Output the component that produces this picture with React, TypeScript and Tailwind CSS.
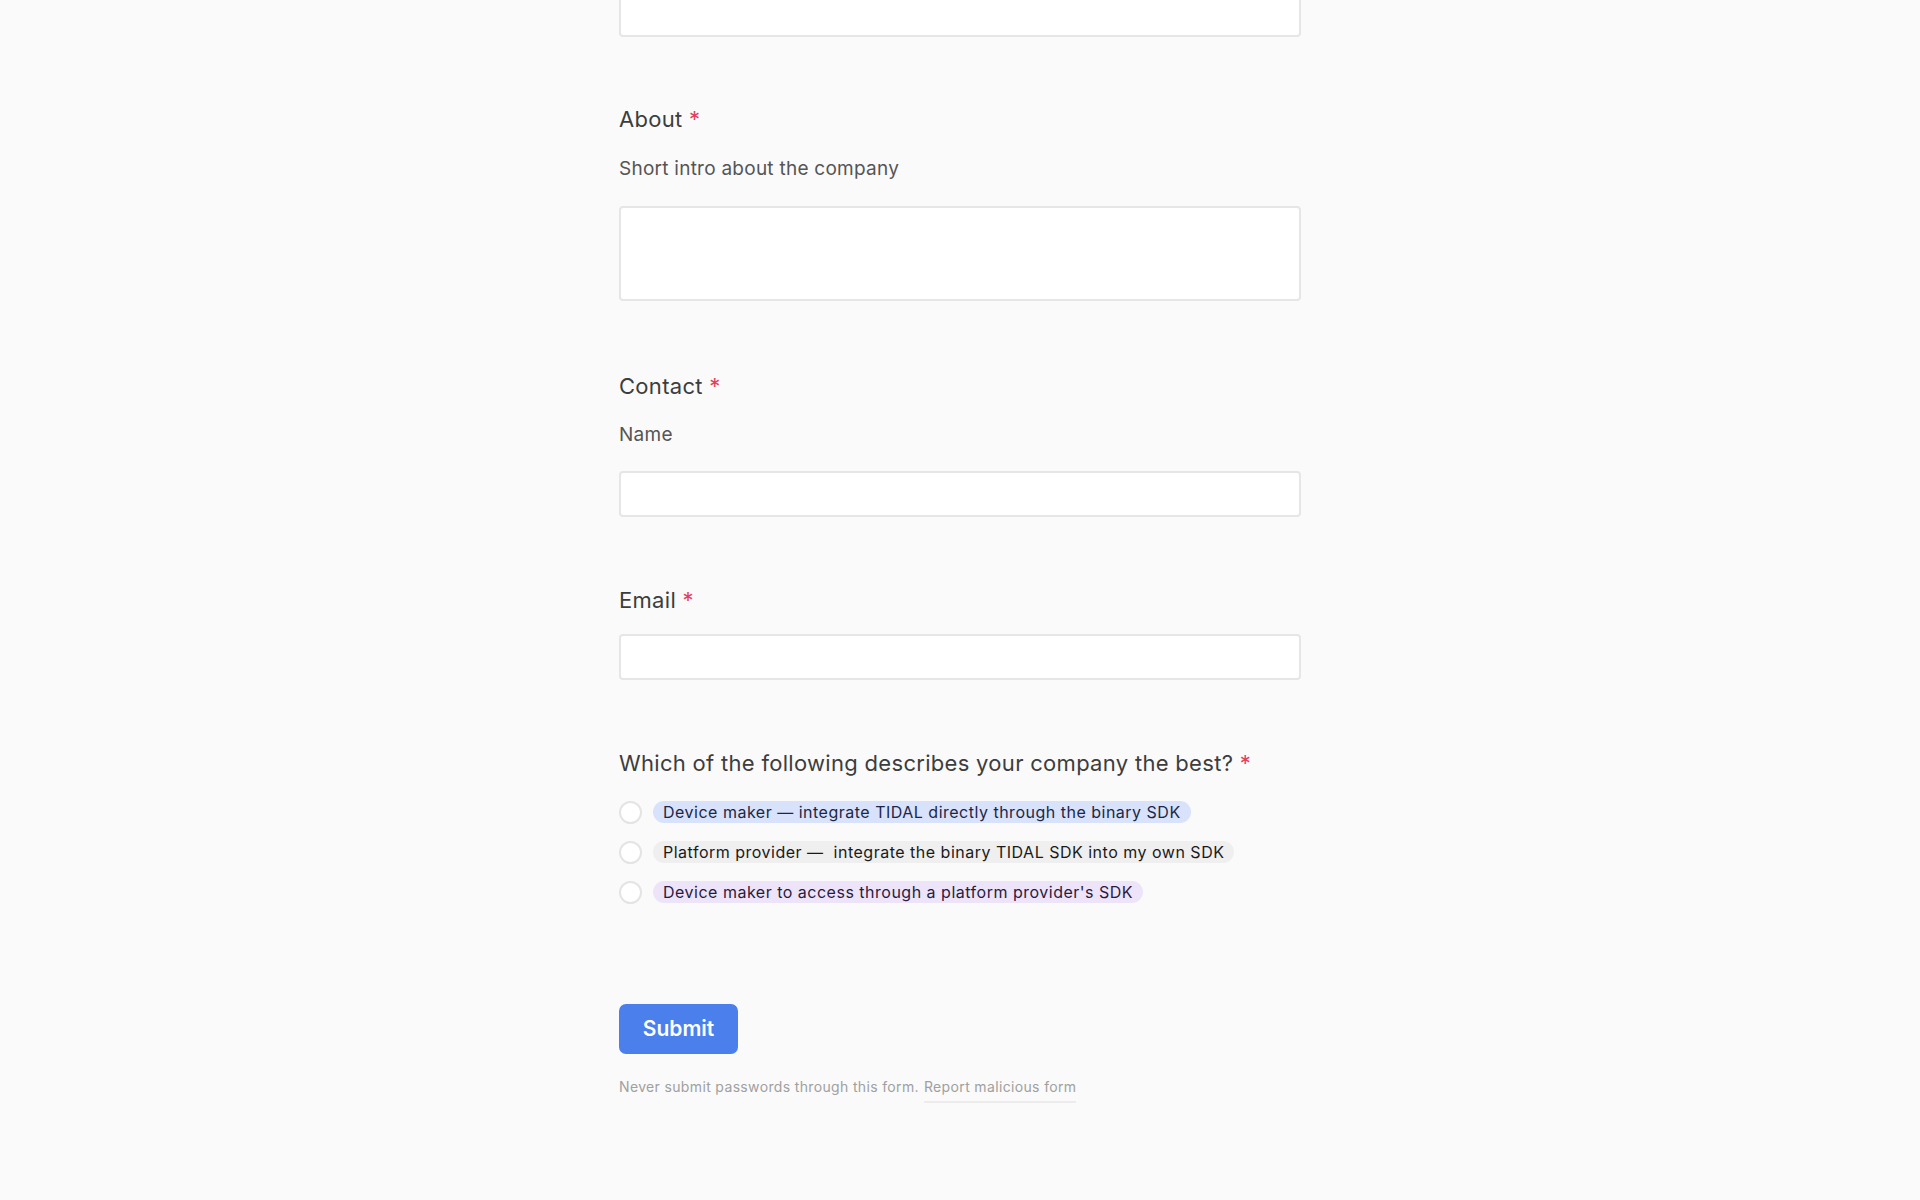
import React from "react";

const font = { fontFamily: "Inter, 'Noto Sans', sans-serif" };

function Label({ text }: { text: string }) {
  return (
    <div className="text-[22px] leading-[28px] text-[#3d3d3d] tracking-[0.3px]">
      {text} <span className="text-[#e0405e]">*</span>
    </div>
  );
}

function Chip({ text, cls }: { text: string; cls: string }) {
  return (
    <div className="flex items-center h-10">
      <div className="w-[23px] h-[23px] rounded-full border-2 border-[#e4e4e4] bg-white shrink-0" />
      <span className={"ml-[11px] h-[22px] flex items-center px-[10px] rounded-full text-[16px] leading-[22px] tracking-[0.5px] whitespace-pre " + cls}>
        {text}
      </span>
    </div>
  );
}

export default function App() {
  return (
    <div className="min-h-[1200px] bg-[#fafafa] overflow-hidden" style={font}>
      <div className="mx-auto w-[682px] flex flex-col">
        <div className="h-[46px] -mt-[9px] bg-white border-2 border-[#e6e6e6] rounded-[4px]" />

        <div className="mt-[68px]">
          <Label text="About" />
        </div>
        <div className="mt-[24px] text-[19px] leading-[24px] text-[#555555] tracking-[0.25px]">Short intro about the company</div>
        <div className="mt-[25px] h-[95px] bg-white border-2 border-[#e6e6e6] rounded-[4px]" />

        <div className="mt-[71px]">
          <Label text="Contact" />
        </div>
        <div className="mt-[23px] text-[19px] leading-[24px] text-[#555555] tracking-[0.25px]">Name</div>
        <div className="mt-[24px] h-[46px] bg-white border-2 border-[#e6e6e6] rounded-[4px]" />

        <div className="mt-[69px]">
          <Label text="Email" />
        </div>
        <div className="mt-[20px] h-[46px] bg-white border-2 border-[#e6e6e6] rounded-[4px]" />

        <div className="mt-[69px]">
          <Label text="Which of the following describes your company the best?" />
        </div>
        <div className="mt-[15px] flex flex-col">
          <Chip text="Device maker — integrate TIDAL directly through the binary SDK" cls="bg-[#d8e2fb] text-[#1c2747]" />
          <Chip text="Platform provider —  integrate the binary TIDAL SDK into my own SDK" cls="bg-[#efefef] text-[#1a1a1a]" />
          <Chip text="Device maker to access through a platform provider's SDK" cls="bg-[#ede4f9] text-[#2a1a40]" />
        </div>

        <div className="mt-[92px]">
          <button className="w-[119px] h-[50px] rounded-[7px] bg-[#4a7fec] text-white text-[21px] font-semibold">
            Submit
          </button>
        </div>

        <div className="mt-[23px] text-[14px] leading-[20px] text-[#a0a0a0] tracking-[0.35px] flex">
          <span>Never submit passwords through this form.</span>
          <span className="ml-[5px] pb-[4px] border-b-2 border-[#ececec]">Report malicious form</span>
        </div>
      </div>
    </div>
  );
}
